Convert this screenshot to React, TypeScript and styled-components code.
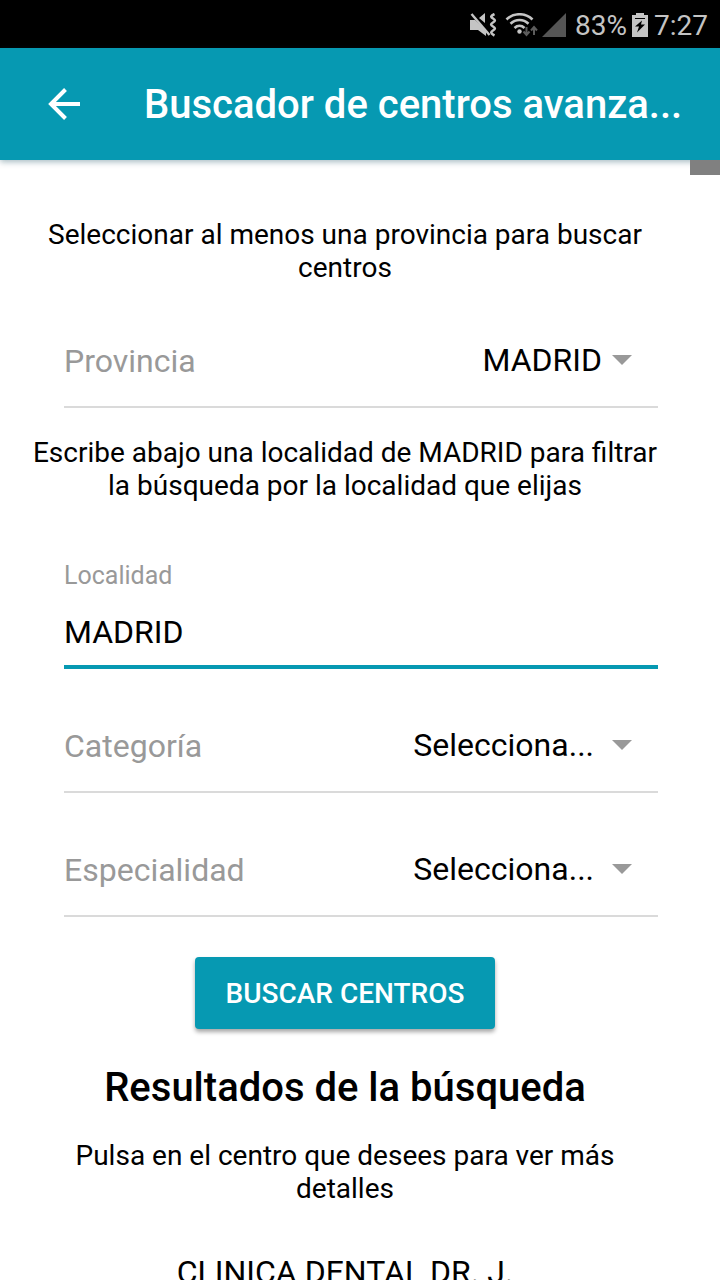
import React from "react";
import styled, { createGlobalStyle } from "styled-components";

const teal = "#0699b2";

const GlobalStyle = createGlobalStyle`
  * { box-sizing: border-box; }
  html, body { margin: 0; background: #fff; }
  body, button, input, select { font-family: Roboto, "Liberation Sans", sans-serif; }
`;

const Screen = styled.div`
  display: flex;
  flex-direction: column;
  height: 100vh;
  overflow: hidden;
`;

const StatusBar = styled.div`
  flex: none;
  display: flex;
  align-items: center;
  justify-content: flex-end;
  height: 48px;
  padding: 2px 12px 0 0;
  background: #000;
  color: #c4c4c4;
  font-size: 28px;
  font-weight: 400;
`;

const StatusIcon = styled.svg<{ $gap: number }>`
  display: block;
  flex: none;
  margin-right: ${(p) => p.$gap}px;
`;

const StatusText = styled.span<{ $gap?: number }>`
  margin-right: ${(p) => p.$gap ?? 0}px;
`;

const Toolbar = styled.header`
  flex: none;
  display: flex;
  align-items: center;
  height: 112px;
  padding: 0 32px;
  background: ${teal};
  box-shadow: 0 2px 6px rgba(0, 60, 80, 0.35);
  position: relative;
`;

const BackButton = styled.button`
  display: flex;
  align-items: center;
  justify-content: center;
  width: 64px;
  height: 64px;
  margin-right: 48px;
  padding: 0;
  border: 0;
  background: none;
  color: #fff;
`;

const Title = styled.h1`
  flex: 1;
  min-width: 0;
  margin: 0;
  padding-top: 2px;
  color: #fff;
  font-size: 40px;
  font-weight: 500;
  line-height: 48px;
  white-space: nowrap;
`;

const Body = styled.div`
  flex: 1;
  min-height: 0;
  display: flex;
`;

const Content = styled.main`
  flex: 1;
  min-width: 0;
  padding: 58px 32px 0;
  overflow: hidden;
  color: #000;
`;

const Track = styled.div`
  flex: none;
  width: 30px;
  position: relative;
  z-index: 1;
`;

const Thumb = styled.div`
  height: 15px;
  background: #808080;
`;

const Hint = styled.p`
  margin: 0;
  font-size: 28px;
  line-height: 33px;
  text-align: center;
`;

const Form = styled.form`
  display: flex;
  flex-direction: column;
`;

const FormHint = styled(Hint)`
  margin: 28px -8px 0;
`;

const SelectRow = styled.div`
  display: flex;
  align-items: center;
  justify-content: space-between;
  height: 124px;
  margin-left: 32px;
  padding: 32px 26px 0 0;
  border-bottom: 2px solid #dadada;
`;

const RowLabel = styled.label`
  color: #999;
  font-size: 32px;
  line-height: 40px;
`;

const Picker = styled.div`
  display: flex;
  align-items: center;
  padding-bottom: 2px;
`;

const Select = styled.select<{ $empty?: boolean }>`
  appearance: none;
  height: 40px;
  margin: 0 ${(p) => (p.$empty ? 18 : 10)}px 0 0;
  padding: 0;
  border: 0;
  background: none;
  color: #000;
  font-size: 32px;
  line-height: 40px;
  text-align-last: right;
`;

const Caret = styled.svg`
  display: block;
  fill: #999;
`;

const TextField = styled.div`
  display: flex;
  flex-direction: column;
  height: 167px;
  margin-left: 32px;
  padding-top: 59px;
  border-bottom: 4px solid ${teal};
`;

const FieldLabel = styled.label`
  color: #999;
  font-size: 25px;
  line-height: 30px;
`;

const Input = styled.input`
  width: 100%;
  height: 48px;
  margin-top: 17px;
  padding: 0;
  border: 0;
  outline: 0;
  background: none;
  color: #000;
  font-size: 32px;
`;

const SearchButton = styled.button`
  align-self: center;
  width: 300px;
  height: 72px;
  margin: 40px 0 35px;
  border: 0;
  border-radius: 4px;
  background: ${teal};
  box-shadow: 0 3px 4px rgba(0, 0, 0, 0.35);
  color: #fff;
  font-size: 28px;
  font-weight: 500;
`;

const ResultsTitle = styled.h2`
  margin: 0 0 27px;
  font-size: 40px;
  font-weight: 500;
  line-height: 48px;
  text-align: center;
`;

const CenterName = styled.p`
  margin: 48px 0 0;
  font-size: 32px;
  line-height: 38px;
  text-align: center;
`;

type SelectFieldProps = { id: string; label: string; value: string; empty?: boolean };

function SelectField({ id, label, value, empty }: SelectFieldProps) {
  return (
    <SelectRow>
      <RowLabel htmlFor={id}>{label}</RowLabel>
      <Picker>
        <Select id={id} $empty={empty}>
          <option>{value}</option>
        </Select>
        <Caret width="20" height="10" viewBox="0 0 20 10" aria-hidden="true">
          <path d="M0 0h20L10 10z" />
        </Caret>
      </Picker>
    </SelectRow>
  );
}

export default function App() {
  return (
    <Screen>
      <GlobalStyle />
      <StatusBar>
        <StatusIcon $gap={8} width="28" height="24" viewBox="0 0 28 24" aria-label="Silencio">
          <path d="M1 7h5l11 10v6L9 17H1zM10 5l6-5v10z" fill="#c4c4c4" />
          <path d="M2.500 1l18 21" stroke="#c4c4c4" strokeWidth="2.400" />
          <path
            d="M25.500 1c-4 2-4 3-1.500 4.500s2.500 2.500 0 4-2.500 2.500 0 4 2.500 2.500 0 4-2.500 3 1.500 5"
            fill="none"
            stroke="#c4c4c4"
            strokeWidth="2.600"
          />
        </StatusIcon>
        <StatusIcon $gap={4} width="33" height="24" viewBox="0 0 33 24" aria-label="Wifi">
          <g fill="none" stroke="#c4c4c4" strokeWidth="2.600">
            <path d="M1.500 6.500c7-7 19-7 26 0" />
            <path d="M5.500 10.800c5.200-5 12.800-5 18 0" />
            <path d="M9.500 15c3-2.800 7-2.800 10 0" />
          </g>
          <circle cx="14.500" cy="18.500" r="2.200" fill="#c4c4c4" />
          <path
            d="M21.500 14v8M18.500 18.500l3 3.500 3-3.500M29 22v-8M26 17.500l3-3.500 3 3.500"
            fill="none"
            stroke="#5c5c5c"
            strokeWidth="2"
          />
        </StatusIcon>
        <StatusIcon $gap={9} width="24" height="24" viewBox="0 0 24 24" aria-label="Cobertura">
          <path d="M24 0v24H0z" fill="#555" />
        </StatusIcon>
        <StatusText $gap={5}>83%</StatusText>
        <StatusIcon $gap={6} width="16" height="24" viewBox="0 0 16 24" aria-label="Cargando">
          <path d="M4 0h8v2h4v22H0V2h4z" fill="#c4c4c4" />
          <path d="M3 5.500h10" stroke="#000" strokeWidth="1" />
          <path d="M10 7.500l-7 6h4l-2 6 8-8H9z" fill="#000" />
        </StatusIcon>
        <StatusText>7:27</StatusText>
      </StatusBar>
      <Toolbar>
        <BackButton type="button" aria-label="Volver">
          <svg width="32" height="32" viewBox="0 0 32 32" fill="none" stroke="currentColor" strokeWidth="4">
            <path d="M32 16H3M17.500 1.500L3 16l14.500 14.500" />
          </svg>
        </BackButton>
        <Title>Buscador de centros avanza...</Title>
      </Toolbar>
      <Body>
        <Content>
          <Hint>Seleccionar al menos una provincia para buscar centros</Hint>
          <Form onSubmit={(e) => e.preventDefault()}>
            <SelectField id="provincia" label="Provincia" value="MADRID" />
            <FormHint>
              Escribe abajo una localidad de MADRID para filtrar la búsqueda por la localidad que elijas
            </FormHint>
            <TextField>
              <FieldLabel htmlFor="localidad">Localidad</FieldLabel>
              <Input id="localidad" type="text" defaultValue="MADRID" />
            </TextField>
            <SelectField id="categoria" label="Categoría" value="Selecciona..." empty />
            <SelectField id="especialidad" label="Especialidad" value="Selecciona..." empty />
            <SearchButton type="submit">BUSCAR CENTROS</SearchButton>
          </Form>
          <ResultsTitle>Resultados de la búsqueda</ResultsTitle>
          <Hint>Pulsa en el centro que desees para ver más detalles</Hint>
          <CenterName>CLINICA DENTAL DR. J.</CenterName>
        </Content>
        <Track aria-hidden="true">
          <Thumb />
        </Track>
      </Body>
    </Screen>
  );
}
